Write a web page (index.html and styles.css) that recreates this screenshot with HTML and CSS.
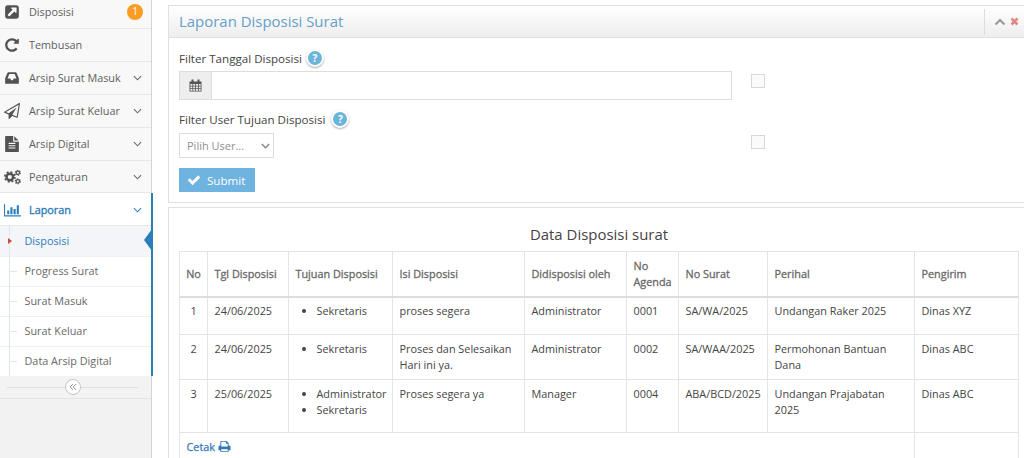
FILE: index.html
```html
<!DOCTYPE html>
<html lang="id">
<head>
<meta charset="utf-8">
<title>Laporan Disposisi Surat</title>
<link rel="stylesheet" href="styles.css">
</head>
<body>
<div class="layout">
  <aside class="sidebar">
    <ul class="nav">
      <li class="nav-item first"><svg class="ico" viewBox="0 0 1792 1792"><path d="M1408 928v-480q0-26-19-45t-45-19h-480q-42 0-59 39-17 41 14 70l144 144-534 534q-19 19-19 45t19 45l102 102q19 19 45 19t45-19l534-534 144 144q18 19 45 19 12 0 25-5 39-17 39-59zm256-512v960q0 119-84.5 203.5t-203.5 84.5h-960q-119 0-203.5-84.5t-84.5-203.5v-960q0-119 84.5-203.5t203.5-84.5h960q119 0 203.5 84.5t84.5 203.5z"/></svg><span class="label">Disposisi</span><span class="badge">1</span></li>
      <li class="nav-item"><svg class="ico" viewBox="0 0 1792 1792"><path d="M1664 256v448q0 26-19 45t-45 19h-448q-42 0-59-40-17-39 14-69l138-138q-148-137-349-137-104 0-198.5 40.5t-163.5 109.5-109.5 163.5-40.5 198.5 40.5 198.5 109.5 163.5 163.5 109.5 198.5 40.5q119 0 225-52t179-147q7-10 23-12 15 0 25 9l137 138q9 8 9.5 20.5t-7.5 22.5q-109 132-264 204.5t-327 72.5q-156 0-298-61t-245-164-164-245-61-298 61-298 164-245 245-164 298-61q147 0 284.5 55.5t244.5 156.5l130-129q29-31 70-14 39 17 39 59z"/></svg><span class="label">Tembusan</span></li>
      <li class="nav-item"><svg class="ico" viewBox="0 0 1792 1792"><path d="M1088 960h316q-1-3-2.500-8.500t-2.500-7.500l-212-496h-582l-212 496q-1 3-2.500 8.500t-2.500 7.500h316l95 192h194zm576 30v482q0 26-19 45t-45 19h-1408q-26 0-45-19t-19-45v-482q0-62 25-123l238-552q10-25 36.500-42t52.500-17h832q26 0 52.500 17t36.500 42l238 552q25 61 25 123z"/></svg><span class="label">Arsip Surat Masuk</span><svg class="chev" viewBox="0 0 10 6"><path d="M1 1l4 4 4-4"/></svg></li>
      <li class="nav-item"><svg class="ico" viewBox="0 0 1792 1792"><path d="M1764 11q33 24 27 64l-256 1536q-5 29-32 45-14 8-31 8-11 0-24-5l-527-215-298 327q-18 21-47 21-14 0-23-4-19-7-30-23.500t-11-36.500v-452l-472-193q-37-14-40-55-3-39 32-59l1664-960q35-21 68 2zm-342 1499l221-1323-1434 827 336 137 863-639-478 797z"/></svg><span class="label">Arsip Surat Keluar</span><svg class="chev" viewBox="0 0 10 6"><path d="M1 1l4 4 4-4"/></svg></li>
      <li class="nav-item"><svg class="ico" viewBox="0 0 1792 1792"><path d="M1596 476q14 14 28 36h-472v-472q22 14 36 28zm-476 164h544v1056q0 40-28 68t-68 28h-1344q-40 0-68-28t-28-68v-1600q0-40 28-68t68-28h800v544q0 40 28 68t68 28zm160 736v-64q0-14-9-23t-23-9h-704q-14 0-23 9t-9 23v64q0 14 9 23t23 9h704q14 0 23-9t9-23zm0-256v-64q0-14-9-23t-23-9h-704q-14 0-23 9t-9 23v64q0 14 9 23t23 9h704q14 0 23-9t9-23zm0-256v-64q0-14-9-23t-23-9h-704q-14 0-23 9t-9 23v64q0 14 9 23t23 9h704q14 0 23-9t9-23z"/></svg><span class="label">Arsip Digital</span><svg class="chev" viewBox="0 0 10 6"><path d="M1 1l4 4 4-4"/></svg></li>
      <li class="nav-item"><svg class="ico wide" viewBox="0 0 16 15"><g fill="none" stroke="#525252"><circle cx="5.500" cy="7.500" r="3.100" stroke-width="2.300"/><circle cx="5.500" cy="7.500" r="4.700" stroke-width="1.600" stroke-dasharray="1.850 1.840"/><circle cx="13" cy="3.500" r="1.600" stroke-width="1.200"/><circle cx="13" cy="3.500" r="2.400" stroke-width="1" stroke-dasharray="1.250 1.260"/><circle cx="13" cy="11.600" r="1.600" stroke-width="1.200"/><circle cx="13" cy="11.600" r="2.400" stroke-width="1" stroke-dasharray="1.250 1.260"/></g></svg><span class="label">Pengaturan</span><svg class="chev" viewBox="0 0 10 6"><path d="M1 1l4 4 4-4"/></svg></li>
    </ul>
    <div class="active-group">
      <div class="nav-item open"><svg class="ico wide" viewBox="0 0 16 15"><path d="M0 2h1v10.500h15v1H0zM3 8h2v3.500H3zM6 5h2v6.500H6zM9 6.500h2v5H9zM12 3h2v8.500h-2z"/></svg><span class="label">Laporan</span><svg class="chev" viewBox="0 0 10 6"><path d="M1 1l4 4 4-4"/></svg></div>
      <ul class="submenu">
        <li class="current">Disposisi<svg class="pointer" viewBox="0 0 8 22"><path d="M8 0v22L0 11z"/></svg></li>
        <li>Progress Surat</li>
        <li>Surat Masuk</li>
        <li>Surat Keluar</li>
        <li>Data Arsip Digital</li>
      </ul>
    </div>
    <div class="collapse"><span class="collapse-btn"><svg viewBox="0 0 8 8"><path d="M4 1L1 4l3 3M7.200 1l-3 3 3 3"/></svg></span></div>
  </aside>

  <main class="content">
    <section class="widget">
      <header class="widget-header">
        <h4>Laporan Disposisi Surat</h4>
        <div class="toolbar">
          <svg class="up" viewBox="0 0 12 8"><path d="M1.500 6.500L6 2l4.500 4.500"/></svg>
          <svg class="close" viewBox="0 0 9 9"><path d="M1.500 1.500l6 6M7.500 1.500l-6 6"/></svg>
        </div>
      </header>
      <div class="widget-body">
        <div class="field-label"><span>Filter Tanggal Disposisi</span><b class="help">?</b></div>
        <div class="field date-field">
          <div class="input-group">
            <span class="addon"><svg viewBox="0 0 13 13"><path fill-rule="evenodd" d="M.5 2.500h12V12.500h-12zM1.400 5v1.700h2V5zM4.200 5v1.700h2V5zM7 5v1.700h2V5zM9.800 5v1.700h1.900V5zM1.400 7.400v1.700h2V7.400zM4.200 7.400v1.700h2V7.400zM7 7.400v1.700h2V7.400zM9.800 7.400v1.700h1.900V7.400zM1.400 9.800v1.900h2V9.800zM4.200 9.800v1.900h2V9.800zM7 9.800v1.900h2V9.800zM9.800 9.800v1.900h1.900V9.800z"/><path d="M2.500.6h2v3h-2zM8.500.6h2v3h-2z"/></svg></span>
            <input class="date-input" type="text">
          </div>
          <span class="check"></span>
        </div>
        <div class="field-label second"><span>Filter User Tujuan Disposisi</span><b class="help">?</b></div>
        <div class="field user-field">
          <div class="select"><span>Pilih User...</span><svg viewBox="0 0 8 5"><path d="M.7.7L4 4 7.300.7"/></svg></div>
          <span class="check"></span>
        </div>
        <button class="submit"><svg viewBox="0 0 1792 1792"><path d="M1671 566q0 40-28 68l-724 724-136 136q-28 28-68 28t-68-28l-136-136-362-362q-28-28-28-68t28-68l136-136q28-28 68-28t68 28l294 295 656-657q28-28 68-28t68 28l136 136q28 28 28 68z"/></svg><span>Submit</span></button>
      </div>
    </section>

    <section class="widget report">
      <h4 class="report-title">Data Disposisi surat</h4>
      <table>
        <colgroup><col class="c1"><col class="c2"><col class="c3"><col class="c4"><col class="c5"><col class="c6"><col class="c7"><col class="c8"><col class="c9"></colgroup>
        <thead><tr><th class="num">No</th><th>Tgl Disposisi</th><th>Tujuan Disposisi</th><th>Isi Disposisi</th><th>Didisposisi oleh</th><th>No Agenda</th><th>No Surat</th><th>Perihal</th><th>Pengirim</th></tr></thead>
        <tbody>
          <tr class="r1"><td class="num">1</td><td>24/06/2025</td><td><ul><li>Sekretaris</li></ul></td><td>proses segera</td><td>Administrator</td><td>0001</td><td>SA/WA/2025</td><td class="subject">Undangan Raker 2025</td><td>Dinas XYZ</td></tr>
          <tr class="r2"><td class="num">2</td><td>24/06/2025</td><td><ul><li>Sekretaris</li></ul></td><td>Proses dan Selesaikan Hari ini ya.</td><td>Administrator</td><td>0002</td><td>SA/WAA/2025</td><td class="subject">Permohonan Bantuan Dana</td><td>Dinas ABC</td></tr>
          <tr class="r3"><td class="num">3</td><td>25/06/2025</td><td><ul><li>Administrator</li><li>Sekretaris</li></ul></td><td>Proses segera ya</td><td>Manager</td><td>0004</td><td>ABA/BCD/2025</td><td class="subject">Undangan Prajabatan 2025</td><td>Dinas ABC</td></tr>
          <tr class="foot"><td colspan="8"><a class="print">Cetak <svg viewBox="0 0 1792 1792"><path d="M448 1536h896v-256h-896v256zm0-640h896v-384h-160q-40 0-68-28t-28-68v-160h-640v640zm1280 64v416q0 13-9.500 22.500t-22.500 9.500h-224v160q0 40-28 68t-68 28h-960q-40 0-68-28t-28-68v-160h-224q-13 0-22.500-9.500t-9.500-22.500v-416q0-79 56.500-135.500t135.500-56.500h64v-544q0-40 28-68t68-28h672q40 0 88 20t76 48l152 152q28 28 48 76t20 88v256h64q79 0 135.500 56.500t56.500 135.500z"/></svg></a></td><td></td></tr>
        </tbody>
      </table>
    </section>
  </main>
</div>
</body>
</html>
```
FILE: styles.css
```css
* { box-sizing: border-box; }
html, body { margin: 0; height: 458px; overflow: hidden; background: #fff; }
body { font-family: "Open Sans", "Noto Sans", sans-serif; font-size: 10.85px; color: #444; }
ul { list-style: none; margin: 0; padding: 0; }
.layout { display: flex; height: 458px; overflow: hidden; }

.sidebar { width: 152px; flex: none; background: #f2f2f2; border-right: 1px solid #d4d4d4; }
.nav-item { display: flex; align-items: center; height: 33px; padding: 0 9px 0 4px; background: #f8f8f8; border-bottom: 1px solid #e8e8e8; color: #606060; }
.nav-item.first { height: 29px; padding-bottom: 4px; padding-right: 8px; }
.nav .nav-item:last-child { height: 32px; padding-top: 1px; }
.ico { width: 16px; height: 16px; flex: none; margin-right: 9px; fill: #525252; }
.ico.wide { width: 17px; margin-right: 8px; }
.label { flex: 1; white-space: nowrap; font-size: 10.85px; line-height: 16px; padding-bottom: 1px; }
.badge { width: 16px; height: 16px; border-radius: 50%; background: #f89c24; color: #fff; font-size: 10px; line-height: 15px; text-align: center; }
.chev { width: 9px; height: 6px; fill: none; stroke: #666; stroke-width: 1.2; }

.active-group { width: 153px; position: relative; border-right: 2px solid #2f7cb0; background: #fff; }
.nav-item.open { height: 33px; padding-top: 2px; background: #fff; color: #2b7dbc; }
.nav-item.open .label { -webkit-text-stroke: .35px #2b7dbc; }
.nav-item.open .ico { fill: #2b7dbc; }
.nav-item.open .chev { stroke: #2b7dbc; }
.submenu { position: relative; }
.submenu::before { content: ""; position: absolute; z-index: 1; left: 9px; top: 0; bottom: 0; border-left: 1px solid #dde6e9; }
.submenu li { position: relative; height: 30px; padding-left: 24.500px; line-height: 28px; color: #686868; border-top: 1px solid #f0f0f0; white-space: nowrap; }
.submenu li::before { content: ""; position: absolute; left: 10px; top: 14px; width: 7px; border-top: 1px solid #dde6e9; }
.submenu .current { line-height: 30px; color: #2b7dbc; background: #f3f5f9; border-top: 0; }
.submenu .current::before { z-index: 2; left: 8px; top: 12px; width: 0; border: 3px solid transparent; border-left: 4px solid #d04a35; border-right: 0; }
.pointer { position: absolute; right: -1px; top: 3px; width: 8px; height: 22px; fill: #2b7dbc; }

.collapse { display: flex; align-items: center; justify-content: center; height: 23px; padding-right: 6px; position: relative; background: #f3f3f3; border-bottom: 1px solid #e4e4e4; }
.collapse::before { content: ""; position: absolute; left: 7px; right: 13px; top: 11px; border-top: 1px solid #e0e0e0; }
.collapse-btn { position: relative; display: flex; align-items: center; justify-content: center; width: 16px; height: 16px; border: 1px solid #c4c4c4; border-radius: 50%; background: #fff; }
.collapse-btn svg { width: 8px; height: 8px; fill: none; stroke: #999; stroke-width: 1; }

.content { flex: 1; min-width: 0; padding: 5px 0 0 16px; }
.widget { width: 870px; border: 1px solid #e0e0e0; background: #fff; }
.widget-header { display: flex; align-items: center; height: 32px; padding-left: 10px; background: linear-gradient(#fff, #eee); border-bottom: 1px solid #e0e0e0; }
h4 { margin: 0; font-weight: 400; }
.widget-header h4 { flex: 1; padding-bottom: 2px; color: #669fc7; font-size: 14.95px; line-height: 20px; }
.toolbar { display: flex; align-items: center; gap: 4px; width: 53px; height: 26px; padding-left: 9px; border-left: 1px solid #ddd; }
.toolbar svg { fill: none; }
.up { width: 12px; height: 8px; stroke: #999; stroke-width: 2; }
.close { width: 9px; height: 9px; stroke: #df8781; stroke-width: 2.6; }
.widget-body { height: 164px; padding: 11px 10px 0; }
.field-label { display: flex; align-items: center; height: 18px; font-size: 11.6px; white-space: nowrap; }
.help { display: block; width: 18px; height: 18px; margin-left: 4px; border: 2px solid #fff; border-radius: 50%; background: #6bb5d8; box-shadow: 0 1px 2px #aaa; color: #fff; font-size: 10px; line-height: 14px; text-align: center; }
.field { display: flex; }
.date-field { margin-top: 4px; height: 29px; }
.input-group { display: flex; width: 553px; height: 29px; border: 1px solid #ddd; }
.addon { display: flex; align-items: center; justify-content: center; width: 32px; background: #eee; border-right: 1px solid #ddd; }
.addon svg { width: 13px; height: 13px; fill: #555; }
.date-input { flex: 1; min-width: 0; border: 0; padding: 0 4px; background: #fff; outline: 0; }
.check { width: 14px; height: 14px; margin: 3px 0 0 19px; border: 1px solid #d8d8d8; background: #fafafa; }
.second { margin-top: 10px; }
.second .help { margin-left: 6px; }
.user-field { margin-top: 5px; height: 26px; }
.user-field .check { margin-top: 2px; }
.select { display: flex; align-items: center; justify-content: space-between; width: 95px; height: 25px; margin-right: 458px; padding: 0 3px 0 7px; border: 1px solid #ddd; color: #909090; font-size: 11px; }
.select svg { width: 9px; height: 6px; fill: none; stroke: #888; stroke-width: 1.3; }
.submit { display: flex; align-items: center; gap: 6px; width: 76px; height: 24px; margin-top: 9px; padding: 0 8px; border: 0; background: #6fb3e0; color: #fff; font: 11.6px "Open Sans", sans-serif; }
.submit svg { width: 14px; height: 14px; fill: #fff; }

.report { height: 262px; margin-top: 4px; padding: 0 10px; }
.report-title { width: 840px; height: 43px; padding-top: 16px; text-align: center; font-size: 14.95px; line-height: 20px; }
table { width: 840px; table-layout: fixed; border-collapse: collapse; line-height: 15.700px; }
.c1 { width: 28px; } .c2 { width: 81px; } .c3 { width: 104px; }
.c4 { width: 132px; } .c5 { width: 102px; } .c6 { width: 52px; }
.c7 { width: 89px; } .c8 { width: 147px; } .c9 { width: 104px; }
th, td { border: 1px solid #e4e4e4; padding: 6px 0 0 6.500px; text-align: left; vertical-align: top; font-weight: 400; }
th { height: 45px; padding: 0 0 0 6.500px; vertical-align: middle; border-bottom: 2px solid #ddd; color: #686868; -webkit-text-stroke: .3px #686868; }
.num { padding-left: 0; text-align: center; }
.r1 td { padding-top: 5px; }
.subject { padding-right: 7px; }
.r1 { height: 38px; } .r2 { height: 45px; } .r3 { height: 53px; } .foot { height: 40px; }
td ul { list-style: disc; padding-left: 21px; }
.print { display: flex; align-items: center; gap: 3px; color: #337ab7; -webkit-text-stroke: .25px #337ab7; }
.print svg { width: 13px; height: 13px; fill: #337ab7; }
```
